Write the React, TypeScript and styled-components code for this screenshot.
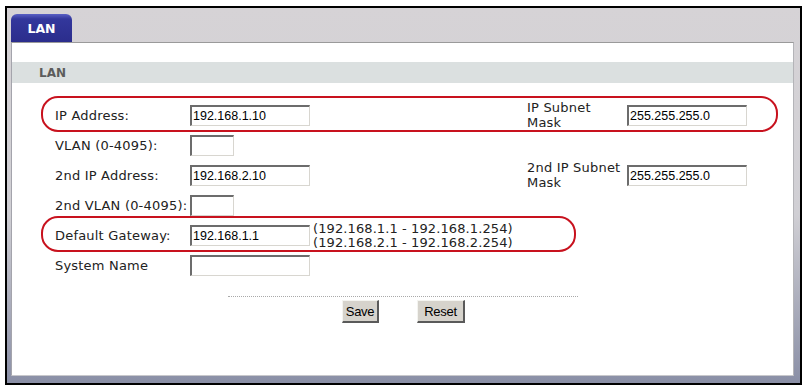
import React from "react";
import styled, { createGlobalStyle } from "styled-components";

const GlobalStyle = createGlobalStyle`
  html, body { margin: 0; padding: 0; background: #ffffff; }
  body { font-family: "DejaVu Sans", Verdana, sans-serif; }
  * { box-sizing: border-box; }
`;

const Frame = styled.div`
  margin: 6px 0 0 5px;
  width: 797px;
  height: 379px;
  border: 2px solid #000;
  background: linear-gradient(#d6d3d6 0%, #d0cfd4 55%, #8a8fa6 100%);
  display: flex;
  flex-direction: column;
`;

const TabStrip = styled.div`
  height: 34px;
  padding: 6px 0 0 4px;
  display: flex;
  align-items: flex-end;
`;

const Tab = styled.div`
  width: 61px;
  height: 28px;
  border-radius: 6px 6px 0 0;
  background: linear-gradient(#5a60c4 0px, #33379c 5px, #2b2d8c 100%);
  color: #fff;
  font: bold 12.5px "DejaVu Sans", Verdana, sans-serif;
  display: flex;
  align-items: center;
  justify-content: center;
  padding-top: 1px;
`;

const Panel = styled.div`
  flex: 1;
  margin: 0 6px 7px 4px;
  background: #fff;
  border-top: 1px solid #9a9a9a;
  border-left: 1px solid #a4a4ac;
  border-right: 1px solid #b4b4b8;
  border-bottom: 1px solid #c8c8cc;
  padding-top: 19px;
  display: flex;
  flex-direction: column;
`;

const SectionHeader = styled.div`
  height: 21px;
  background: #dbe0e0;
  padding-left: 27px;
  display: flex;
  align-items: center;
  font: bold 12px "DejaVu Sans", Verdana, sans-serif;
  color: #5c5c5c;
`;

const Form = styled.div`
  margin-top: 17px;
  padding-left: 43px;
  display: flex;
  flex-direction: column;
`;

const Row = styled.div`
  position: relative;
  height: 30px;
  display: grid;
  grid-template-columns: 135px 337px 100px 120px;
  align-items: center;
`;

const Label = styled.div`
  font-size: 13px;
  letter-spacing: 0.2px;
  color: #222;
  line-height: 15px;
  white-space: nowrap;
`;

const WrapLabel = styled.div`
  font-size: 13px;
  letter-spacing: 0.2px;
  color: #222;
  line-height: 15px;
  width: 100px;
`;

const Cell = styled.div<{ $span?: number }>`
  display: flex;
  align-items: center;
  gap: 3px;
  grid-column: span ${(p) => p.$span ?? 1};
`;

const TextInput = styled.input<{ $w: number }>`
  width: ${(p) => p.$w}px;
  height: 21px;
  margin: 0;
  padding: 0 0 0 1px;
  border-style: solid;
  border-width: 2px 1px 1px 2px;
  border-color: #6c6c6c #d8d6d0 #d8d6d0 #6c6c6c;
  background: #fff;
  font: 12.5px "Liberation Sans", Arial, sans-serif;
  color: #000;
  outline: none;
`;

const Range = styled.div`
  font-size: 13px;
  line-height: 14px;
  letter-spacing: 0.1px;
  color: #222;
  white-space: nowrap;
  padding-top: 1px;
`;

const Highlight = styled.span<{ $w: number }>`
  position: absolute;
  left: -14px;
  top: -4px;
  width: ${(p) => p.$w}px;
  height: 36px;
  border: 2px solid #c8121e;
  border-radius: 17px;
  pointer-events: none;
`;

const Separator = styled.div`
  width: 350px;
  margin: 16px auto 0;
  border-top: 1px dotted #a9a9a9;
`;

const Buttons = styled.div`
  margin-top: 3px;
  display: flex;
  justify-content: center;
  gap: 38px;
  padding-left: 2px;
`;

const Button = styled.button<{ $w: number }>`
  width: ${(p) => p.$w}px;
  height: 23px;
  padding: 0;
  background: #d6d3cc;
  border-style: solid;
  border-width: 1px 2px 2px 1px;
  border-color: #f4f4f0 #5a5a5a #5a5a5a #f4f4f0;
  font: 13px "Liberation Sans", Arial, sans-serif;
  letter-spacing: -0.3px;
  color: #000;
`;

export default function App() {
  return (
    <>
      <GlobalStyle />
      <Frame>
        <TabStrip>
          <Tab>LAN</Tab>
        </TabStrip>
        <Panel>
          <SectionHeader>LAN</SectionHeader>
          <Form>
            <Row>
              <Label>IP Address:</Label>
              <Cell>
                <TextInput $w={120} defaultValue="192.168.1.10" />
              </Cell>
              <WrapLabel>IP Subnet Mask</WrapLabel>
              <Cell>
                <TextInput $w={120} defaultValue="255.255.255.0" />
              </Cell>
              <Highlight $w={737} />
            </Row>
            <Row>
              <Label>VLAN (0-4095):</Label>
              <Cell>
                <TextInput $w={44} defaultValue="" />
              </Cell>
            </Row>
            <Row>
              <Label>2nd IP Address:</Label>
              <Cell>
                <TextInput $w={120} defaultValue="192.168.2.10" />
              </Cell>
              <WrapLabel>2nd IP Subnet Mask</WrapLabel>
              <Cell>
                <TextInput $w={120} defaultValue="255.255.255.0" />
              </Cell>
            </Row>
            <Row>
              <Label>2nd VLAN (0-4095):</Label>
              <Cell>
                <TextInput $w={44} defaultValue="" />
              </Cell>
            </Row>
            <Row>
              <Label>Default Gateway:</Label>
              <Cell $span={3}>
                <TextInput $w={120} defaultValue="192.168.1.1" />
                <Range>
                  (192.168.1.1 - 192.168.1.254)
                  <br />
                  (192.168.2.1 - 192.168.2.254)
                </Range>
              </Cell>
              <Highlight $w={535} />
            </Row>
            <Row>
              <Label>System Name</Label>
              <Cell>
                <TextInput $w={120} defaultValue="" />
              </Cell>
            </Row>
          </Form>
          <Separator />
          <Buttons>
            <Button $w={37}>Save</Button>
            <Button $w={48}>Reset</Button>
          </Buttons>
        </Panel>
      </Frame>
    </>
  );
}
